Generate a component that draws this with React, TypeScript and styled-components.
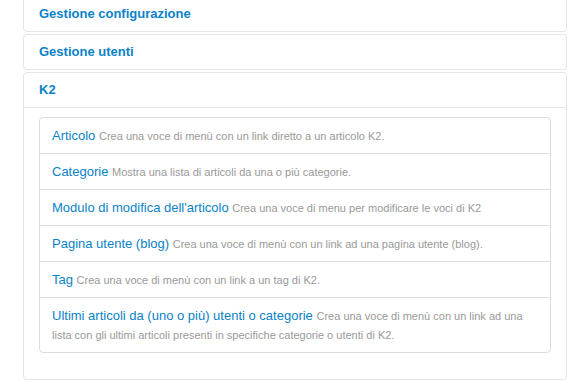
import React from "react";
import styled, { createGlobalStyle } from "styled-components";

const Global = createGlobalStyle`
  html, body { margin: 0; padding: 0; background: #fff; }
  body { font-family: "Liberation Sans", Arial, sans-serif; font-size: 13px; line-height: 18px; color: #333; overflow: hidden; }
`;

const Accordion = styled.div`
  margin: -4px 0 0 23px;
  width: 544px;
`;

const Group = styled.div`
  border: 1px solid #e5e5e5;
  border-radius: 4px;
  margin-bottom: 2px;
`;

const Toggle = styled.a`
  display: block;
  padding: 8px 15px;
  font-weight: bold;
  color: #0a82c8;
  text-decoration: none;
  line-height: 18px;
`;

const Inner = styled.div`
  border-top: 1px solid #e5e5e5;
  padding: 9px 15px;
`;

const List = styled.ul`
  list-style: none;
  margin: 0 0 18px;
  padding: 0;
`;

const Item = styled.li<{ $first?: boolean; $last?: boolean }>`
  border: 1px solid #ddd;
  margin-bottom: -1px;
  padding: 8px 12px;
  line-height: 19px;
  border-radius: ${(p) => (p.$first ? "4px 4px 0 0" : p.$last ? "0 0 4px 4px" : "0")};
`;

const Title = styled.a`
  color: #0a82c8;
  font-size: 13px;
  text-decoration: none;
`;

const Desc = styled.small`
  color: #999;
  font-size: 11px;
  line-height: 1;
`;

const items = [
  ["Articolo", "Crea una voce di menù con un link diretto a un articolo K2."],
  ["Categorie", "Mostra una lista di articoli da una o più categorie."],
  ["Modulo di modifica dell'articolo", "Crea una voce di menu per modificare le voci di K2"],
  ["Pagina utente (blog)", "Crea una voce di menù con un link ad una pagina utente (blog)."],
  ["Tag", "Crea una voce di menù con un link a un tag di K2."],
  [
    "Ultimi articoli da (uno o più) utenti o categorie",
    "Crea una voce di menù con un link ad una lista con gli ultimi articoli presenti in specifiche categorie o utenti di K2.",
  ],
];

export default function App() {
  return (
    <>
      <Global />
      <Accordion>
        <Group>
          <Toggle>Gestione configurazione</Toggle>
        </Group>
        <Group>
          <Toggle>Gestione utenti</Toggle>
        </Group>
        <Group>
          <Toggle>K2</Toggle>
          <Inner>
            <List>
              {items.map(([t, d], i) => (
                <Item key={t} $first={i === 0} $last={i === items.length - 1}>
                  <Title>{t}</Title> <Desc>{d}</Desc>
                </Item>
              ))}
            </List>
          </Inner>
        </Group>
      </Accordion>
    </>
  );
}
